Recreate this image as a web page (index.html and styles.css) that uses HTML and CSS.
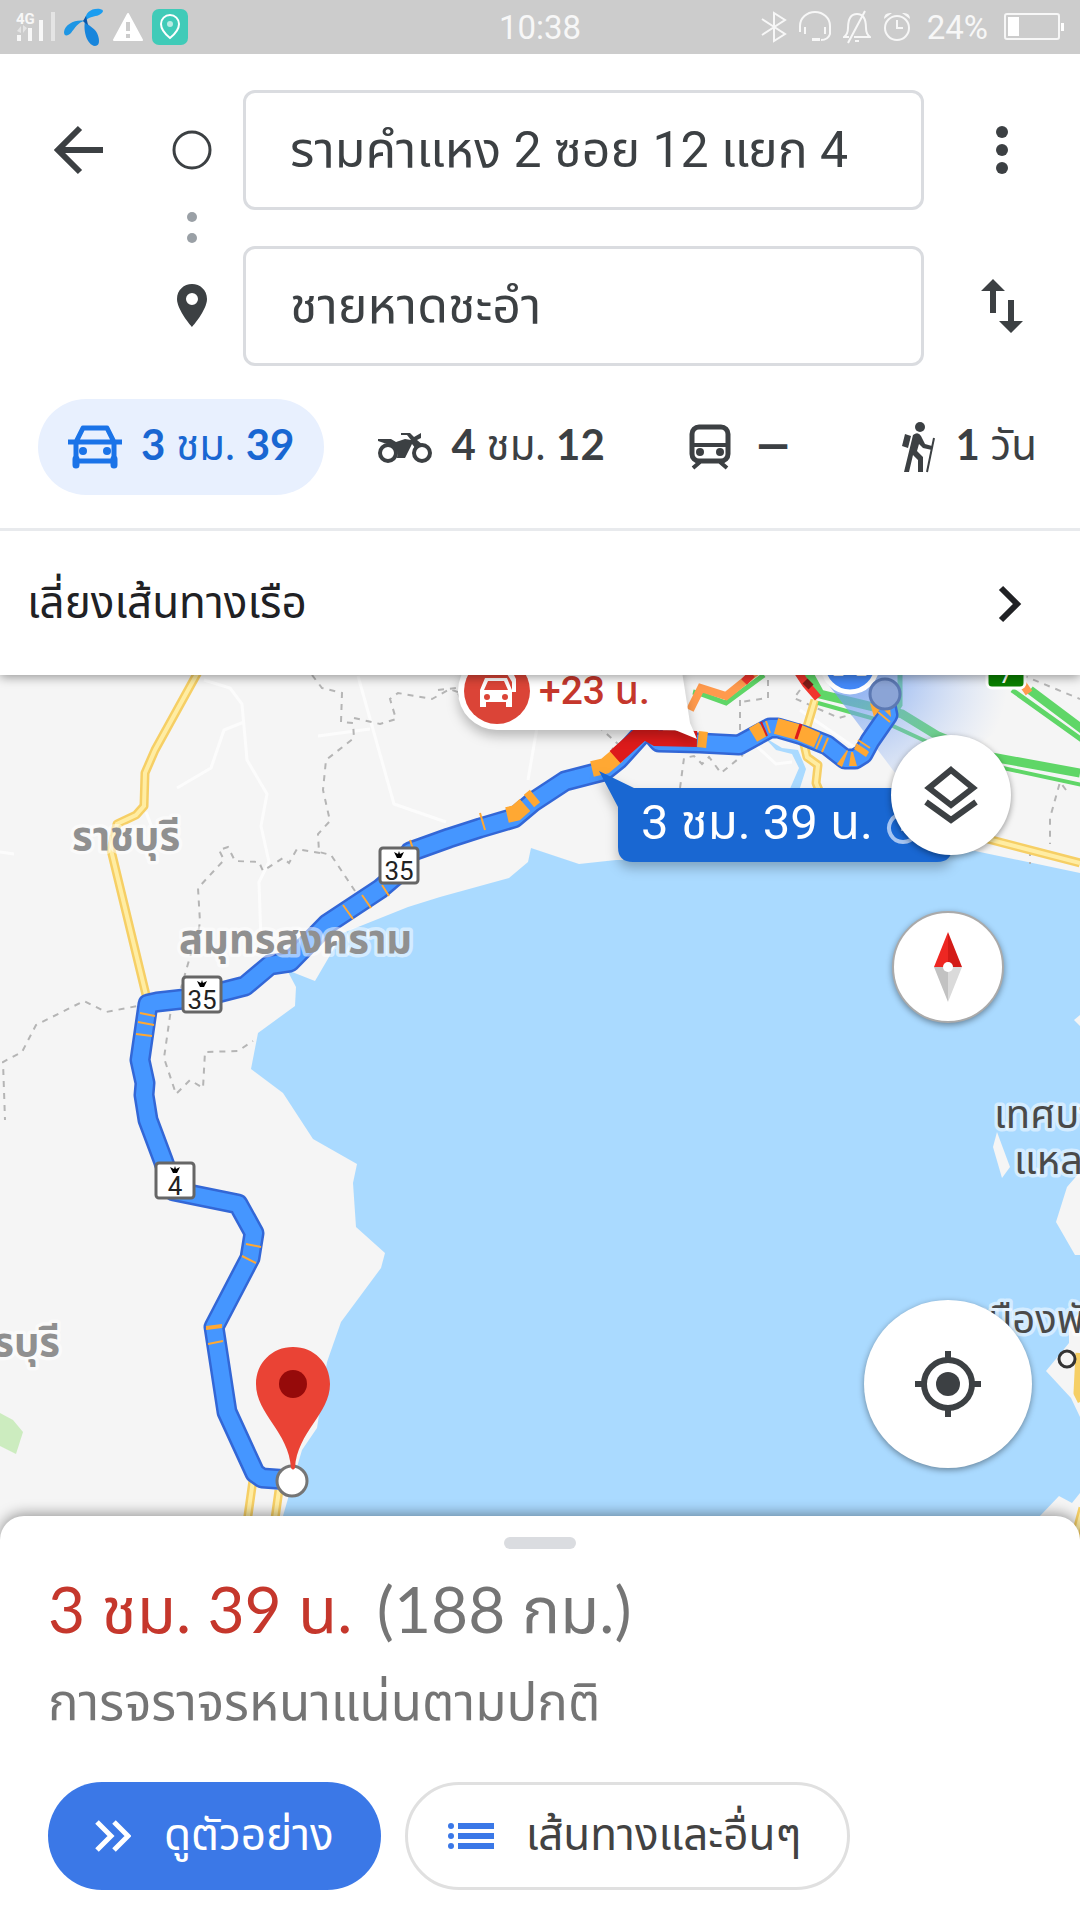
FILE: index.html
```html
<!DOCTYPE html>
<html lang="th">
<head>
    <meta charset="UTF-8">
    <meta name="viewport" content="width=device-width, initial-scale=1.0">
    <title>เส้นทาง</title>
    <link rel="stylesheet" href="styles.css">
</head>
<body>

    <div class="status-bar">
        <div class="status-group">
            <svg width="40" height="32" viewBox="0 0 40 32">
                <text class="signal-text" x="0" y="13">4G</text>
                <path fill="#e4e4e4" d="M1 20l4-5v7zM11 17l-4-3v8zM35 1h4v29h-4z"/>
                <path fill="#f7f7f7" d="M1 24h4v6H1zM12 17h4v13h-4zM23 9h4v21h-4z"/>
            </svg>
            <svg width="40" height="38" viewBox="0 0 40 38">
                <path fill="#1b9df0" d="M21 13C21 5 27 0 36 1c5 1 3 4-1 6-5 2-9 1-14 6z"/>
                <path fill="#1e96e4" d="M21 13C12 11 1 16 0 24c0 5 4 4 7 1 4-5 7-11 14-12z"/>
                <path fill="#1785dc" d="M21 13c-2 10 2 24 10 25 6 0 4-9 2-13-3-6-8-6-12-12z"/>
                <path fill="#0b56a8" d="M19 13l3-5 2 9-3-2z"/>
            </svg>
            <svg width="32" height="30" viewBox="0 0 32 30">
                <path fill="#fff" d="M16 2L30 28H2z" stroke="#fff" stroke-width="2" stroke-linejoin="round"/>
                <path fill="#ccc" d="M14 10h4v9h-4zM14 22h4v4h-4z"/>
            </svg>
            <svg width="36" height="36" viewBox="0 0 36 36">
                <rect width="36" height="36" rx="7" fill="#40cbb8"/>
                <path fill="none" stroke="#fff" stroke-width="2" d="M18 29c-5-4-9-9-9-14a9 9 0 0 1 18 0c0 5-4 10-9 14z"/>
                <circle cx="18" cy="15" r="3" fill="#b9ebe4"/>
            </svg>
        </div>
        <span class="status-text">10:38</span>
        <div class="status-group status-right">
            <svg width="26" height="32" viewBox="0 0 26 32">
                <path class="thin" d="M1 8l23 15-11 7V2l11 7L1 24"/>
            </svg>
            <svg width="32" height="32" viewBox="0 0 32 32">
                <path class="thin" d="M1 21v-6a15 14 0 0 1 30 0v8q-2 6-9 6M6 16v7M26 16v7"/>
                <path fill="#f7f7f7" d="M13 27h8v3h-8z"/>
            </svg>
            <svg width="28" height="34" viewBox="0 0 28 34">
                <path class="thin" d="M6 27H1q4-3 4-9c0-8 2-14 9-14s9 6 9 14q0 6 4 9H11M22 1L5 33M12 31h4"/>
            </svg>
            <svg width="28" height="32" viewBox="0 0 28 32">
                <circle class="thin" cx="14" cy="17" r="12"/>
                <path class="thin" d="M14 9v8h6"/>
                <path fill="#f7f7f7" d="M1 8q0-7 8-6zM27 8q0-7-8-6z"/>
            </svg>
            <span class="status-text battery-text">24%</span>
            <svg width="60" height="28" viewBox="0 0 60 28">
                <rect class="thin" x="1" y="1" width="54" height="25" rx="2"/>
                <path fill="#fff" d="M4 4h11v19H4zM57 10h3v8h-3z"/>
            </svg>
        </div>
    </div>

    <header class="header">
        <div class="route-form">
            <button class="icon-button" aria-label="ย้อนกลับ">
                <svg width="50" height="50" viewBox="0 0 50 50">
                    <path fill="none" stroke="#3c4043" stroke-width="6" d="M49 25H5M26 3L4 25l22 22"/>
                </svg>
            </button>
            <div class="route-marker">
                <svg width="40" height="40" viewBox="0 0 40 40">
                    <circle cx="20" cy="20" r="18" fill="none" stroke="#3c4043" stroke-width="3"/>
                </svg>
            </div>
            <input class="route-input" type="text" value="รามคำแหง 2 ซอย 12 แยก 4" aria-label="จุดเริ่มต้น">
            <button class="icon-button" aria-label="ตัวเลือก">
                <svg width="14" height="50" viewBox="0 0 14 50" fill="#3c4043">
                    <circle cx="7" cy="7" r="6"/>
                    <circle cx="7" cy="25" r="6"/>
                    <circle cx="7" cy="43" r="6"/>
                </svg>
            </button>

            <div class="route-marker route-dots">
                <svg width="10" height="32" viewBox="0 0 10 32" fill="#9aa0a6">
                    <circle cx="5" cy="5" r="5"/>
                    <circle cx="5" cy="26" r="5"/>
                </svg>
            </div>

            <div class="route-marker route-marker-end">
                <svg width="30" height="44" viewBox="0 0 30 44">
                    <path fill="#3c4043" fill-rule="evenodd" d="M15 0C7 0 0 6 0 15c0 11 15 28 15 28s15-17 15-28C30 6 23 0 15 0zm0 21a6 6 0 1 1 0-12 6 6 0 0 1 0 12z"/>
                </svg>
            </div>
            <input class="route-input" type="text" value="ชายหาดชะอำ" aria-label="ปลายทาง">
            <button class="icon-button" aria-label="สลับต้นทางและปลายทาง">
                <svg width="42" height="56" viewBox="0 0 42 56" fill="#3c4043">
                    <path d="M12 1l12 12h-9v22H9V13H0zM30 55L18 43h9V22h6v21h9z"/>
                </svg>
            </button>
        </div>

        <nav class="modes">
            <button class="mode mode-active">
                <svg width="54" height="44" viewBox="0 0 54 44">
                    <path fill="none" stroke="#1a73e8" stroke-width="5" stroke-linejoin="round" d="M8 17l7-14h24l7 14v19H8zM0 17h54"/>
                    <path stroke="#1a73e8" stroke-width="7" stroke-linecap="round" d="M8 34v6M46 34v6"/>
                    <circle cx="15" cy="26" r="4" fill="#1a73e8"/>
                    <circle cx="39" cy="26" r="4" fill="#1a73e8"/>
                </svg>
                <span><b>3</b> ชม. <b>39</b></span>
            </button>
            <button class="mode">
                <svg width="54" height="36" viewBox="0 0 54 36">
                    <circle cx="10" cy="24" r="8" fill="#fff" stroke="#3c4043" stroke-width="4"/>
                    <circle cx="44" cy="24" r="8" fill="#fff" stroke="#3c4043" stroke-width="4"/>
                    <path fill="#3c4043" d="M0 12v-2h13l5 3 9-3 6 1-4-5h-6V4h9l4 4 7-4v5l-4 2 6 5-7 4-4-5-7 14H19c2-8-2-12-10-14z"/>
                </svg>
                <span><b>4</b> ชม. <b>12</b></span>
            </button>
            <button class="mode mode-transit">
                <svg width="42" height="46" viewBox="0 0 42 46">
                    <rect x="3" y="3" width="36" height="34" rx="7" fill="none" stroke="#3c4043" stroke-width="5"/>
                    <path stroke="#3c4043" stroke-width="4" d="M2 21h38M11 38l-7 6M31 38l7 6"/>
                    <circle cx="11" cy="28" r="4" fill="#3c4043"/>
                    <circle cx="31" cy="28" r="4" fill="#3c4043"/>
                </svg>
                —
            </button>
            <button class="mode mode-walk">
                <svg width="34" height="52" viewBox="0 0 34 52">
                    <circle cx="18" cy="6" r="5" fill="#3c4043"/>
                    <path fill="#3c4043" d="M3 13l6 2-3 12-6-2zM11 14q5-4 8 1l4 8 7 2v4l-9-2-4-4-2 7 6 6v15h-5V39l-5-5-4 17H2z"/>
                    <path stroke="#3c4043" stroke-width="2" d="M32 17l-7 34"/>
                </svg>
                <span><b>1</b> วัน</span>
            </button>
        </nav>

        <button class="notice">
            เลี่ยงเส้นทางเรือ
            <svg width="24" height="38" viewBox="0 0 24 38">
                <path fill="none" stroke="#202124" stroke-width="6" d="M3 3l16 16L3 35"/>
            </svg>
        </button>
    </header>

    <main class="map">
        <svg class="map-canvas" viewBox="0 675 1080 865" preserveAspectRatio="xMidYMin slice">
            <defs>
                <radialGradient id="beam" gradientUnits="userSpaceOnUse" cx="850" cy="665" r="160">
                    <stop offset="0.2" stop-color="#6f9df0" stop-opacity="0.7"/>
                    <stop offset="1" stop-color="#a9c4f5" stop-opacity="0"/>
                </radialGradient>
                <path id="route" d="M290 1480l-28-2-7-5-28-61-13-85 36-69 4-25-16-29-64-13-11-31-15-40-4-25 1-12-5-23 8-56 9-2 45-5 43-11 25-21 20-3 37-38 53-35 20-17 10-20 39-14 31-10 34-10 19-16 32-21 27-7 12-3 15-12 28-31 12 14 41 1 39 2 31-17h8l24 7 25 10 18 14h10l8-5 7-13 18-26-2-10"/>
            </defs>

            <!-- sea, islands and parks -->
            <path class="water" d="M1080 873L975 851 900 858 616 860 579 864 531 848 528 862 509 878 440 897 408 907 343 933 315 981 287 970 296 987 295 1006 258 1033 251 1069 283 1093 313 1139 357 1164 353 1183 356 1227 385 1253 381 1268 341 1322 327 1362 317 1428 302 1450 297 1467 283 1516 278 1540H1017L1059 1496 1072 1503 1080 1493z"/>
            <path class="water" d="M764 737l18 11 16 2 8 19-7 22h-10l10-23-7-14-16-4z"/>
            <path class="land" d="M997 1132l-4 15 9 31 8-11zM1080 1172l-13 15-11 35 19 33h5zM1080 1313l-11 10v20l-23 28 25 27 9 19zM1080 1015l-6 5 6 6z"/>
            <path fill="#ccecbf" d="M0 1413l13 7 10 12-7 22-16-8z"/>

            <!-- minor roads -->
            <path class="road" d="M204 680l26 8 12 16 5 56 20 34-6 32 8 36-10 20 2 60M244 722l-20 8-13 38-34 20M358 676l36 128 52 18M318 736l52-7M146 812l10 26M540 710l-12 70M0 852l14 2M750 740l26 24 16-2M800 710l70 48"/>

            <!-- province borders -->
            <path class="border" d="M312 675l10 13 20 5-1 29 12 1 1 15-28 22-3 30 7 31-12 13 1 18 12 3 24 36M354 718l26 6 16-5-6-20 8-6 34 6 18-10 10 4M320 853l-23-4-8 14-6-5-20 13-4-9-24-1-7-14-9 3 5 10-26 28 2 34-6 34M192 950l-11 38M172 1002l-8 56 12 36 14-14 13 8 2-36 33-1 15-10M148 1004l-42 8-22-11-48 24-14 27-19 10 2 58M438 690l18-2 4 10M580 710l38 34M624 758l-12-10M740 700v34M768 680v18l-28 4M680 788l4-30 10-2 8 8 7-7 12 16 22-18M800 690l-6 8 45 20 14-4M1066 790l-6-8-10 36v26M1030 850v14M1022 675l58 24"/>

            <!-- highways -->
            <path class="highway-edge" d="M198 672l-43 78-10 23-1 33-8 9-19 9-6 26 36 149M253 1480l-7 50M279 1490l-7 50M980 837l100 26M815 700l-12 40 4 17 11 8-2 18 5 12M1080 1353l-2 40 4 8M1083 1508l-8 30"/>
            <path class="highway" d="M198 672l-43 78-10 23-1 33-8 9-19 9-6 26 36 149M253 1480l-7 50M279 1490l-7 50M980 837l100 26M815 700l-12 40 4 17 11 8-2 18 5 12M1083 1508l-8 30"/>

            <!-- traffic -->
            <g fill="none">
                <path stroke="#5fd667" stroke-width="5" d="M693 692l8 2 25 9 38-28M1012 690l70 50M900 665v40l-8 12"/>
                <path stroke="#5fd667" stroke-width="9" d="M1030 690l56 42M808 672l12 22 82 20 36 22 48 20 94 17"/>
                <path stroke="#5fd667" stroke-width="4" d="M818 703l64 18 52 24 60 21 88 19"/>
                <path stroke="#ff9a4d" stroke-width="8" d="M690 710l11-22 25 8 30-24M1022 683l7 10"/>
                <path stroke="#f0352d" stroke-width="8" d="M798 672l8 12 12 14M744 682l8-8"/>
                <path stroke="#7d1c17" stroke-width="7" d="M805 681l6 6"/>
            </g>

            <path fill="url(#beam)" d="M828 684l80 106 92-60 10-55H850z"/>

            <!-- route -->
            <use href="#route" class="route-edge"/>
            <use href="#route" class="route-fill"/>
            <g class="jam">
                <path d="M507 815l9-2 9-8M529 801l6-5M592 769l13-3 13-11M698 739l9 1M753 735l10-6M776 726l22 6 19 8"/>
            </g>
            <path class="jam jam-heavy" d="M615 757l29-26 12 7 41 1M797 731l3 1"/>
            <path class="jam-line" d="M480 813l5 17M343 905l10 14M362 895l9 13M382 885l7 11M410 840l3 9M140 1013l15 3M138 1022l16 3M136 1034l16 2M246 1244l15 3M242 1256l14 7M206 1327l16-2M206 1329l16-2M208 1344l15-3M822 735l-6 14M828 738l-6 14M858 740l12 8M856 744l12 8M878 712l12 10M766 721l4 12"/>
            <path fill="#ffa833" d="M847 750l-10 14 5 3 6-16zM851 752l-2 14h8l-4-14zM854 749l12 8 3-5-13-7zM870 703l4 14 7-9zM884 710l7 7-1-9z"/>
            <path stroke="#d81e1e" stroke-width="2" d="M761 722l6 14"/>

            <!-- start and end -->
            <circle cx="850" cy="665" r="27" fill="#4489f8" stroke="#fff" stroke-width="5"/>
            <path fill="#fff" d="M833 676l6-4 5 4zM856 676l6-4 5 4z"/>
            <circle cx="885" cy="694" r="15" fill="#8ba4d6" stroke="#5c79b3" stroke-width="3"/>
            <circle class="end-point" cx="292" cy="1481" r="15"/>
            <path fill="#ea4335" d="M293 1347c-21 0-37 16-37 37 0 30 33 48 35 84q2 3 4 0c2-36 35-54 35-84 0-21-16-37-37-37z"/>
            <circle cx="293" cy="1384" r="14" fill="#960a0a"/>

            <!-- place names -->
            <g class="place">
                <text x="72" y="850">ราชบุรี</text>
                <text x="179" y="953">สมุทรสงคราม</text>
                <text x="60" y="1356" text-anchor="end">เพชรบุรี</text>
            </g>
            <g class="place place-small">
                <text x="994" y="1128">เทศบาลนคร</text>
                <text x="1014" y="1174">แหลมฉบัง</text>
                <text x="976" y="1333">เมืองพัทยา</text>
            </g>
            <circle cx="1067" cy="1359" r="8" fill="#f5f5f5" stroke="#333" stroke-width="3"/>

            <!-- road shields -->
            <g class="shield">
                <rect x="380" y="848" width="38" height="35" rx="3"/>
                <path d="M394 852l4 2 1-3 1 3 4-2-3 6h-4z"/>
                <text x="399" y="880">35</text>
                <rect x="183" y="977" width="38" height="35" rx="3"/>
                <path d="M197 981l4 2 1-3 1 3 4-2-3 6h-4z"/>
                <text x="202" y="1009">35</text>
                <rect x="156" y="1163" width="38" height="35" rx="3"/>
                <path d="M170 1167l4 2 1-3 1 3 4-2-3 6h-4z"/>
                <text x="175" y="1195">4</text>
            </g>
            <rect x="987" y="650" width="38" height="38" rx="5" fill="#0a8000" stroke="#fff" stroke-width="3"/>
            <text class="motorway" x="1006" y="683">7</text>

            <!-- delay on the other route -->
            <g class="callout">
                <path fill="#fff" d="M497 652h182l11 71 7 16-22-9H497a39 39 0 0 1 0-78z"/>
            </g>
            <circle cx="497" cy="691" r="33" fill="#db4437"/>
            <path fill="#fff" fill-rule="evenodd" d="M480 704v-14l5-12h22l5 12v17h-6v-5h-20v5h-6zM484 690h24l-4-9h-16zM487 700a3 3 0 1 0 0-6 3 3 0 0 0 0 6zM505 700a3 3 0 1 0 0-6 3 3 0 0 0 0 6zM496 675l3-6h12l5 10v13h-4v-10l-5-8z"/>
            <text class="delay-text" x="539" y="704">+23 น.</text>

            <!-- time on the chosen route -->
            <g class="callout">
                <path fill="#1967d2" d="M599 771l35 17h303q15 0 15 15v44q0 15-15 15H633q-15 0-15-15v-40z"/>
            </g>
            <text class="time-text" x="641" y="839">3 ชม. 39 น.</text>
            <path fill="none" stroke="#a6c5f2" stroke-width="4" d="M903 819v10h8M903 814a14 14 0 1 0 .1 0z"/>
        </svg>

        <button class="map-button layers" aria-label="เลเยอร์">
            <svg width="54" height="58" viewBox="0 0 54 58">
                <path fill="none" stroke="#3c4043" stroke-width="6" d="M27 4l22 18-22 17L5 22zM2 36l25 18 25-18"/>
            </svg>
        </button>
        <button class="map-button compass" aria-label="เข็มทิศ">
            <svg width="28" height="70" viewBox="0 0 28 70">
                <path fill="#ee2722" d="M14 0v35H0z"/>
                <path fill="#d31b17" d="M14 0v35h14z"/>
                <path fill="#c2c2c2" d="M14 70V35H0z"/>
                <path fill="#dadada" d="M14 70V35h14z"/>
                <circle cx="14" cy="35" r="5" fill="#fff"/>
            </svg>
        </button>
        <button class="map-button locate" aria-label="ตำแหน่งของฉัน">
            <svg width="66" height="66" viewBox="0 0 66 66">
                <circle cx="33" cy="33" r="24" fill="none" stroke="#3c4043" stroke-width="6"/>
                <circle cx="33" cy="33" r="12" fill="#3c4043"/>
                <path stroke="#3c4043" stroke-width="6" d="M33 0v9M33 57v9M0 33h9M57 33h9"/>
            </svg>
        </button>
    </main>

    <section class="sheet">
        <div class="sheet-handle"></div>
        <h1 class="summary"><span class="summary-time">3 ชม. 39 น.</span> (188 กม.)</h1>
        <p class="summary-note">การจราจรหนาแน่นตามปกติ</p>
        <div class="actions">
            <button class="action action-primary">
                <svg width="36" height="32" viewBox="0 0 36 32">
                    <path fill="none" stroke="#fff" stroke-width="5" d="M2 2l14 14L2 30M19 2l14 14-14 14"/>
                </svg>
                ดูตัวอย่าง
            </button>
            <button class="action action-outline">
                <svg width="46" height="28" viewBox="0 0 46 28" fill="#3b78e7">
                    <path d="M10 1h36v6H10zM10 11h36v6H10zM10 21h36v6H10z"/>
                    <circle cx="3" cy="4" r="3"/>
                    <circle cx="3" cy="14" r="3"/>
                    <circle cx="3" cy="24" r="3"/>
                </svg>
                เส้นทางและอื่นๆ
            </button>
        </div>
    </section>

</body>
</html>
```

FILE: styles.css
```css
* {
    box-sizing: border-box;
}
body {
    margin: 0;
    min-height: 100vh;
    display: flex;
    flex-direction: column;
    font-family: Roboto, "Noto Sans Thai", "Noto Sans", sans-serif;
    background: white;
    color: #3c4043;
}
button {
    font-family: inherit;
    color: inherit;
    background: none;
    border: none;
    padding: 0;
    cursor: pointer;
}
svg {
    display: block;
    flex-shrink: 0;
}

/* status bar */
.status-bar {
    position: relative;
    z-index: 3;
    display: grid;
    grid-template-columns: 1fr auto 1fr;
    align-items: center;
    height: 54px;
    padding: 0 16px;
    background: #ccc;
}
.status-group {
    display: flex;
    align-items: center;
    gap: 8px;
}
.status-right {
    justify-content: flex-end;
    gap: 12px;
}
.status-text {
    font-size: 33px;
    color: #f7f7f7;
}
.battery-text {
    margin: 0 4px;
}
.signal-text {
    font-size: 15px;
    font-weight: bold;
    fill: #f7f7f7;
}
.thin {
    fill: none;
    stroke: #f7f7f7;
    stroke-width: 2;
}

/* header */
.header {
    position: relative;
    z-index: 2;
    background: white;
    box-shadow: 0 2px 10px rgba(0, 0, 0, 0.4);
}
.route-form {
    display: grid;
    grid-template-columns: 157px 86px 1fr 156px;
    grid-template-rows: 120px 36px 120px;
    align-items: center;
    justify-items: center;
    padding-top: 36px;
}
.route-marker {
    justify-self: start;
    width: 70px;
    display: flex;
    justify-content: center;
}
.route-marker-end {
    grid-column: 2;
}
.route-dots {
    grid-column: 2;
    grid-row: 2;
}
.route-input {
    width: 100%;
    min-width: 0;
    height: 120px;
    padding: 4px 44px 0;
    border: 3px solid #dadce0;
    border-radius: 12px;
    background: white;
    font-family: inherit;
    font-size: 50px;
    color: #3c4043;
}
.modes {
    display: flex;
    gap: 24px;
    padding: 33px 13px 33px 38px;
    border-bottom: 3px solid #e8eaed;
}
.mode {
    display: flex;
    align-items: center;
    gap: 19px;
    height: 96px;
    padding: 0 30px;
    border-radius: 48px;
    font-family: Lato, "Noto Sans Thai", sans-serif;
    font-size: 42px;
}
.mode-active {
    background: #e8f0fe;
    color: #1967d2;
}
.mode-transit {
    gap: 26px;
    font-family: Roboto, sans-serif;
    font-weight: bold;
}
.mode-walk {
    margin-left: auto;
}
.notice {
    display: flex;
    align-items: center;
    justify-content: space-between;
    width: 100%;
    height: 144px;
    padding: 2px 58px 0 27px;
    font-size: 44px;
    color: #202124;
}

/* map */
.map {
    position: relative;
    flex: 1;
    min-height: 600px;
    overflow: hidden;
    background: #f5f5f5;
}
.map-canvas {
    position: absolute;
    width: 100%;
    height: 100%;
}
.water {
    fill: #aadaff;
}
.land {
    fill: #f5f5f5;
}
.road {
    fill: none;
    stroke: #fcfcfc;
    stroke-width: 3;
}
.border {
    fill: none;
    stroke: #b5b5b5;
    stroke-width: 2;
    stroke-dasharray: 6 6;
}
.highway-edge {
    fill: none;
    stroke: #f6cf65;
    stroke-width: 9;
    stroke-linejoin: round;
}
.highway {
    fill: none;
    stroke: #ffeda3;
    stroke-width: 4;
}
.route-edge {
    fill: none;
    stroke: #3367d6;
    stroke-width: 21;
    stroke-linejoin: round;
}
.route-fill {
    fill: none;
    stroke: #4596ff;
    stroke-width: 16;
    stroke-linejoin: round;
}
.jam {
    fill: none;
    stroke: #ffa833;
    stroke-width: 16;
}
.jam-heavy {
    stroke: #dd1b1b;
}
.jam-line {
    fill: none;
    stroke: #ffa833;
    stroke-width: 2;
}
.end-point {
    fill: white;
    stroke: #757575;
    stroke-width: 3;
}
.place {
    font-size: 40px;
    font-weight: bold;
    fill: #909090;
    stroke: rgba(255, 255, 255, 0.5);
    stroke-width: 7;
    stroke-linejoin: round;
    paint-order: stroke;
}
.place-small {
    font-weight: normal;
    fill: #4a4a4a;
}
.shield rect {
    fill: white;
    stroke: #666;
    stroke-width: 3;
}
.shield text {
    font-size: 26px;
    text-anchor: middle;
    fill: #222;
}
.motorway {
    font-size: 26px;
    text-anchor: middle;
    fill: white;
}
.callout {
    filter: drop-shadow(0 6px 6px rgba(0, 0, 0, 0.25));
}
.delay-text {
    font-size: 39px;
    font-weight: 500;
    fill: #c5372c;
}
.time-text {
    font-size: 49px;
    fill: white;
}
.map-button {
    position: absolute;
    display: flex;
    align-items: center;
    justify-content: center;
    border-radius: 50%;
    background: white;
    box-shadow: 0 2px 6px rgba(0, 0, 0, 0.4);
}
.layers {
    top: 60px;
    right: 69px;
    width: 120px;
    height: 120px;
}
.compass {
    top: 236px;
    right: 76px;
    width: 112px;
    height: 112px;
    border: 2px solid #aaa;
}
.locate {
    right: 48px;
    bottom: 72px;
    width: 168px;
    height: 168px;
}

/* bottom sheet */
.sheet {
    position: relative;
    z-index: 1;
    margin-top: -24px;
    padding: 21px 48px 30px;
    border-radius: 24px 24px 0 0;
    background: white;
    box-shadow: 0 -2px 14px rgba(0, 0, 0, 0.4);
}
.sheet-handle {
    width: 72px;
    height: 12px;
    margin: 0 auto;
    border-radius: 6px;
    background: #dadce0;
}
.summary {
    margin: 12px 0 0;
    font-family: Lato, "Noto Sans Thai", sans-serif;
    font-size: 64px;
    font-weight: normal;
    line-height: 96px;
    color: #757575;
}
.summary-time {
    margin-right: 8px;
    color: #c5372c;
}
.summary-note {
    margin: 10px 0 0;
    font-size: 51px;
    line-height: 72px;
    color: #757575;
}
.actions {
    display: flex;
    gap: 24px;
    margin-top: 43px;
}
.action {
    display: flex;
    align-items: center;
    gap: 33px;
    height: 108px;
    padding: 0 47px;
    border-radius: 54px;
    font-size: 44px;
}
.action-primary {
    background: #3b78e7;
    color: white;
}
.action-outline {
    gap: 32px;
    padding: 0 45px 0 40px;
    border: 3px solid #e0e0e0;
    color: #424242;
}
```
